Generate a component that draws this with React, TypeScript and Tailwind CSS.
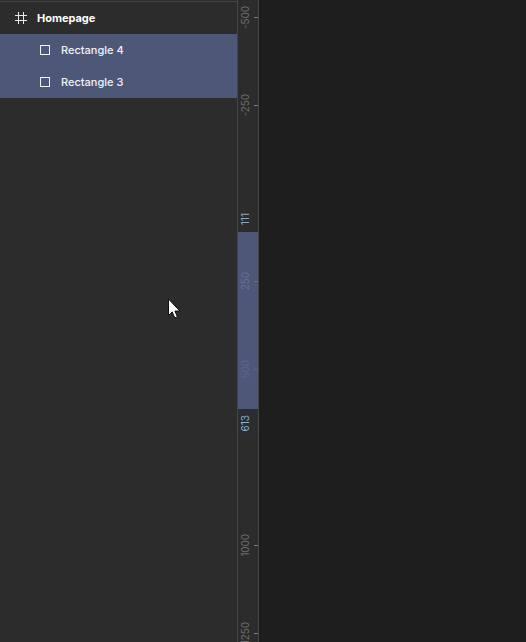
import React from 'react';

const FONT = "font-['Inter','Liberation_Sans',sans-serif]";

type Mark = { label: string; tone: string; tick: string };

const marks: Mark[] = [
  { label: '-500', tone: 'text-[#6c6c6c]', tick: 'bg-[#7c7c7c]' },
  { label: '-250', tone: 'text-[#6c6c6c]', tick: 'bg-[#7c7c7c]' },
  { label: '', tone: '', tick: 'bg-transparent' },
  { label: '250', tone: 'text-[#66709a]', tick: 'bg-[#66709a]' },
  { label: '500', tone: 'text-[#5b668f]', tick: 'bg-[#5b658c]' },
  { label: '', tone: '', tick: 'bg-transparent' },
  { label: '1000', tone: 'text-[#6c6c6c]', tick: 'bg-[#7c7c7c]' },
  { label: '1250', tone: 'text-[#6c6c6c]', tick: 'bg-[#7c7c7c]' },
];

function FrameIcon() {
  return (
    <svg className="h-3 w-3 shrink-0" viewBox="0 0 12 12" fill="none" stroke="#e8e8e8" shapeRendering="crispEdges">
      <path d="M3.5 0v12M8.5 0v12M0 3.5h12M0 8.5h12" />
    </svg>
  );
}

function LayerRow({ name }: { name: string }) {
  return (
    <div className="flex h-8 items-center gap-[11px] bg-[#4d5878] pl-10 text-[#f1f3f8]">
      <span className="h-[10px] w-[10px] shrink-0 border border-[#f1f3f8]" />
      <span className="text-[11px] leading-4 font-medium">{name}</span>
    </div>
  );
}

function Ruler() {
  return (
    <div className="relative h-full w-[22px] shrink-0 overflow-hidden border-x border-[#454545] bg-[#2c2c2c]">
      <div className="absolute inset-x-0 top-[232px] h-[177px] bg-[#4d5878]" />
      <div className="relative -mt-[27px] flex flex-col">
        {marks.map((m, i) => (
          <div key={i} className="flex h-[88px] shrink-0 items-center justify-between pl-px">
            <span className={`rotate-180 text-[10px] leading-[12px] tracking-[-0.1px] [writing-mode:vertical-rl] ${m.tone}`}>
              {m.label}
            </span>
            <span className={`mt-px h-px w-1 ${m.tick}`} />
          </div>
        ))}
      </div>
      <div className="absolute top-[213px] left-px rotate-180 text-[10px] leading-[12px] text-[#8fa5ba] [writing-mode:vertical-rl]">
        111
      </div>
      <div className="absolute inset-x-0 top-[409px] h-[26px] bg-[#2b2d30]" />
      <div className="absolute top-[415px] left-px rotate-180 text-[10px] leading-[12px] text-[#8fb0cf] [writing-mode:vertical-rl]">
        613
      </div>
    </div>
  );
}

export default function App() {
  return (
    <div className={`relative flex h-[642px] w-[526px] overflow-hidden bg-[#1e1e1e] ${FONT}`}>
      <div className="h-full w-[237px] shrink-0 bg-[#2c2c2c]">
        <div className="h-px" />
        <div className="h-px bg-[#444444]" />
        <div className="flex h-8 items-center gap-[10px] pl-[15px] text-white">
          <FrameIcon />
          <span className="text-[11px] leading-4 font-bold tracking-[-0.02px]">Homepage</span>
        </div>
        <LayerRow name="Rectangle 4" />
        <LayerRow name="Rectangle 3" />
      </div>
      <Ruler />
      <div className="h-full flex-1 bg-[#1e1e1e]" />
      <svg className="absolute top-[297px] left-[167px] h-[23px] w-[15px]" viewBox="0 0 15 23">
        <path
          d="M1.5 2v16.5l3.7-3.6 2.6 6 2.6-1.1-2.5-5.8h4.9z"
          fill="#ffffff"
          stroke="#101010"
          strokeWidth="1"
          strokeLinejoin="round"
        />
      </svg>
    </div>
  );
}
